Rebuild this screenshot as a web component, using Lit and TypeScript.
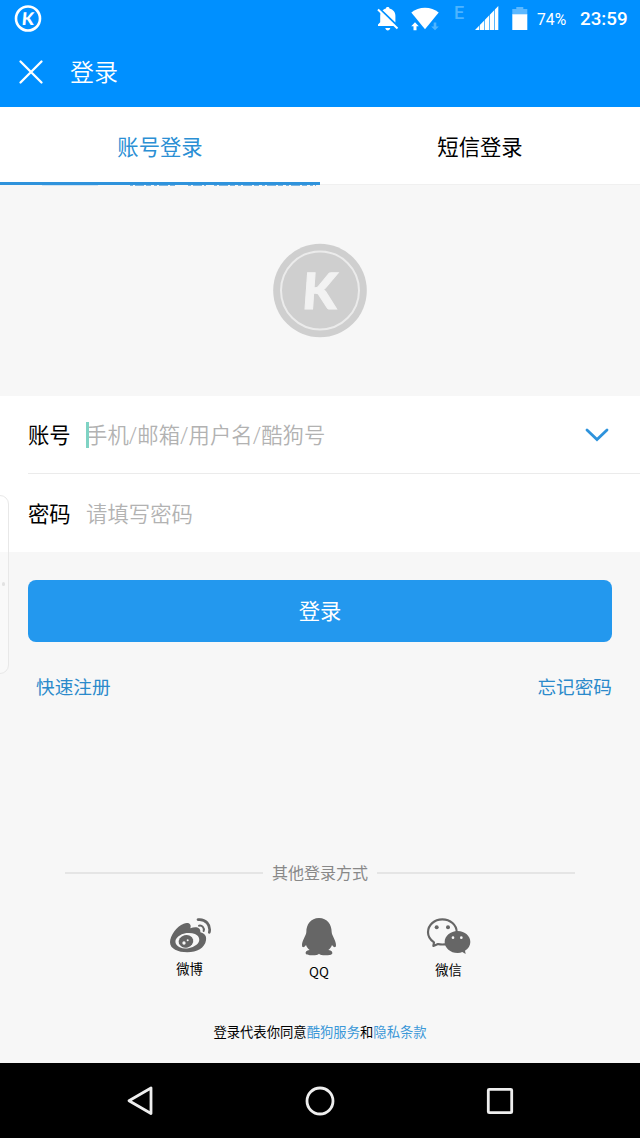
import { LitElement, html, css, svg } from "lit";
import { customElement, property, state } from "lit/decorators.js";
import { classMap } from "lit/directives/class-map.js";

const bell = svg`<svg class="bell" width="24" height="26" viewBox="376 6 24 26">
  <path fill="#fff" d="M381 11.5 395.500 26H378v-1.500l2.200-2.200v-6.300c0-1.600.2-3 .8-4.500zM382.600 10.200c1-1 2-1.500 3.400-1.800V8c0-1.500 3.400-1.500 3.400 0v.5c4 1 6 4 6 7.500v6.500zM385.300 28h5c-.4 3.200-4.600 3.200-5 0z"/>
  <path stroke="#fff" stroke-width="2" d="M378 9.500 397.500 28.500"/></svg>`;

const wifi = svg`<svg class="wifi" width="30" height="26" viewBox="410 6 30 26">
  <path fill="#fff" d="M411.300 12.600C418.500 6 431.500 6 438.700 12.600L425 29.300z"/>
  <path fill="#fff" stroke="#0090ff" stroke-width="1.500" paint-order="stroke" d="M415 22.200 418.800 26.300H416.500V30.300H413.500V26.300H411.200z"/>
  <path fill="#4db4ff" d="M435 30.300 431.200 26.500H433.700V22.500H436.300V26.500H438.800z"/></svg>`;

const signal = svg`<svg class="signal" width="24" height="26" viewBox="475 5 24 26">
  <path fill="#fff" d="M475 30 498.300 6V30z"/>
  <path stroke="#0090ff" stroke-opacity=".65" stroke-width="1" d="M479.500 20V31M484.500 15V31M489.500 10V31M494.500 5V31"/></svg>`;

const battery = svg`<svg class="battery" width="16" height="25" viewBox="512 6 16 25">
  <path fill="#5cb8ff" d="M512.300 9h4V7h7v2h4v6h-15z"/>
  <path fill="#fff" d="M512.300 14.300h15V30h-15z"/></svg>`;

const weibo = svg`<svg width="43" height="37" viewBox="54 50 129 111">
  <path fill="#666" d="M60 126C60 105 80 78 101 70C115 65 126 71 121 84C136 78 153 80 151 96C165 100 170 107 168 120C165 143 140 156 112 156C84 156 60 146 60 126Z"/>
  <ellipse cx="112" cy="121" rx="36" ry="23" fill="#f7f7f7" transform="rotate(-8 112 121)"/>
  <ellipse cx="108" cy="123" rx="22" ry="19" fill="#666" transform="rotate(-15 108 123)"/>
  <circle cx="102" cy="128" r="5" fill="#f7f7f7"/><circle cx="113" cy="120" r="3" fill="#f7f7f7"/>
  <path fill="none" stroke="#666" stroke-width="8" stroke-linecap="round" d="M144 58C166 55 183 73 178 96"/>
  <path fill="none" stroke="#666" stroke-width="6" stroke-linecap="round" d="M147 76C156 74 164 82 161 92"/></svg>`;

const qq = svg`<svg width="36" height="39" viewBox="453 53 108 117">
  <path fill="#666" d="M507 56C482 56 469 76 469 98C469 108 456 123 456 137C456 147 462 145 468 137C470 144 474 148 479 152C468 154 467 158 467 161C467 167 477 168 487 168C498 168 504 166 507 163C510 166 516 168 527 168C537 168 547 167 547 161C547 158 546 154 535 152C540 148 544 144 546 137C552 145 558 147 558 137C558 123 545 108 545 98C545 76 532 56 507 56Z"/></svg>`;

const wechat = svg`<svg width="46" height="38" viewBox="828 50 138 114">
  <path fill="none" stroke="#666" stroke-width="6.500" stroke-linejoin="round" d="M877 57C853 57 834 74 834 96C834 109 841 119 852 126L850 137L864 131C868 132 872 132.500 877 132.500C901 132.500 920 116 920 95C920 74 901 57 877 57Z"/>
  <circle cx="860" cy="81" r="6" fill="#666"/><circle cx="894" cy="81" r="6" fill="#666"/>
  <path fill="#666" d="M923 92C901 92 884 107 884 125C884 143 901 158 923 158C928 158 933 157 937 155L947 161L945 151C955 145 961 136 961 125C961 107 945 92 923 92Z"/>
  <circle cx="909" cy="112" r="4" fill="#f7f7f7"/><circle cx="934" cy="112" r="4" fill="#f7f7f7"/></svg>`;

@customElement("status-bar")
class StatusBar extends LitElement {
  static styles = css`
    :host { display: flex; height: 38px; padding: 0 12px 0 14px; color: #fff; font-family: Roboto, sans-serif; white-space: nowrap; }
    svg { display: block; flex: none; }
    .badge { margin-top: 4px; }
    .bell { margin: 6px 0 0 auto; }
    .wifi { margin: 6px 0 0 10px; }
    .net { width: 20px; margin: 3px 0 0 14px; font-size: 18px; font-weight: 500; line-height: 20px; color: #4db4ff; }
    .signal { margin: 5px 0 0 1px; }
    .battery { margin: 6px 0 0 13px; }
    .pct { width: 43px; margin-left: 9px; font-size: 15.700px; line-height: 39px; }
    .time { width: 48px; font-size: 18.800px; font-weight: 500; line-height: 39px; }
  `;
  render() {
    return html`
      <svg class="badge" width="28" height="28" viewBox="0 0 28 28">
        <circle cx="14" cy="14.500" r="12" fill="none" stroke="#fff" stroke-width="2.600"/>
        <text transform="translate(13.400 20.500) skewX(-5)" text-anchor="middle" font-family="Lato" font-weight="900" font-size="17.500" fill="#fff">K</text>
      </svg>
      ${bell}${wifi}<span class="net">E</span>${signal}${battery}
      <span class="pct">74%</span><span class="time">23:59</span>`;
  }
}

@customElement("form-row")
class FormRow extends LitElement {
  @property() label = "";
  @property() hint = "";
  @property({ type: Boolean }) active = false;
  static styles = css`
    :host { display: flex; align-items: center; height: 77px; padding: 1px 30px 0 28px; font-size: 21.33px; line-height: 32px; color: #000; }
    .label { width: 58px; }
    .hint { flex: 1; color: #b2b2b2; position: relative; font-weight: 350; letter-spacing: 0.05px; }
    .caret { position: absolute; left: 0; top: 2px; width: 3px; height: 26px; background: #7fd3c4; }
    svg { display: block; margin-top: -1px; }
  `;
  render() {
    return html`<span class="label">${this.label}</span>
      <span class="hint">${this.active ? html`<i class="caret"></i>` : ""}${this.hint}</span>
      ${this.active
        ? html`<svg width="26" height="18" viewBox="0 0 26 18"><path d="M3 4 13 13.500 23 4" fill="none" stroke="#2e93dc" stroke-width="2.800" stroke-linecap="round"/></svg>`
        : ""}`;
  }
}

@customElement("app-root")
class AppRoot extends LitElement {
  @state() private tab = 0;
  static styles = css`
    :host { display: flex; flex-direction: column; position: relative; width: 640px; height: 1138px; overflow: hidden; background: #f7f7f7; font-family: Roboto, "Noto Sans CJK SC", sans-serif; color: #000; }
    svg { display: block; }
    .top { height: 107px; background: #0090ff; color: #fff; }
    .bar { display: flex; align-items: center; height: 68px; padding-left: 18px; font-size: 24px; line-height: 36px; font-weight: 350; }
    .bar span { margin: 2px 0 0 26px; }
    .tabs { display: flex; height: 78px; background: #fff; }
    .tab { flex: 1; box-sizing: border-box; height: 78px; text-align: center; font-size: 21.33px; line-height: 81px; border-bottom: 1px solid #f0f0f0; }
    .tab.on { color: #2b8fd4; border-bottom: 3.500px solid #2f93dc; }
    .hero { display: flex; justify-content: center; position: relative; height: 211px; }
    .hero svg { margin-top: 57px; }
    .hero .residue { position: absolute; left: 0; top: 0; margin: 0; }
    .form { background: #fff; height: 156px; }
    .rule { height: 1px; margin: -1px 0 1px 28px; background: #ebebeb; }
    .submit { margin: 28px 28px 0; height: 62px; border-radius: 8px; background: #2398ee; color: #fff; text-align: center; font-size: 21.33px; line-height: 64px; }
    .links { display: flex; justify-content: space-between; margin: 32px 28px 0 36px; font-size: 18.67px; line-height: 28px; color: #2b8acb; }
    .other { display: flex; align-items: center; gap: 9px; margin: 160px 65px 0; font-size: 16px; line-height: 24px; color: #888; }
    .other i { flex: 1; height: 2px; margin-top: -2px; background: #e5e5e5; }
    .ways { display: grid; grid-template-columns: repeat(3, 129.500px); justify-content: center; height: 66px; margin: 31px 0 0 -2px; font-size: 13.33px; line-height: 20px; }
    .way { display: flex; flex-direction: column; align-items: center; gap: 6px; }
    .latin { font-size: 14px; font-family: "Noto Sans CJK SC", sans-serif; font-size: 13.33px; }
    .terms { margin-top: 40px; text-align: center; font-size: 13.33px; line-height: 20px; }
    .terms b { font-weight: 400; color: #3b98d8; }
    .nav { display: flex; justify-content: space-around; align-items: center; height: 75px; margin-top: auto; padding: 0 50px; background: #000; }
    .handle { position: absolute; left: -11px; top: 495px; width: 18px; height: 177px; border: 1px solid #e8e8e8; border-radius: 9px; background: rgba(255,255,255,.25); }
    .dot { position: absolute; left: 12px; top: 86px; width: 3px; height: 4px; background: #e2e2e2; border-radius: 2px; }
  `;
  render() {
    return html`
      <div class="top">
        <status-bar></status-bar>
        <div class="bar">
          <svg width="26" height="26" viewBox="0 0 26 26"><path d="M2.500 2.500 23.500 23.500M23.500 2.500 2.500 23.500" stroke="#fff" stroke-width="2.300" stroke-linecap="round"/></svg>
          <span>登录</span>
        </div>
      </div>
      <div class="tabs">
        ${["账号登录", "短信登录"].map((t, i) => html`<div class=${classMap({ tab: true, on: this.tab === i })} @click=${() => (this.tab = i)}>${t}</div>`)}
      </div>
      <div class="hero">
        <svg class="residue" width="320" height="2" viewBox="0 0 320 2"><path d="M42 .3H98" stroke="#a5cdec" stroke-width=".6"/><path d="M130 .5H176M188 .5H206M214 .5H316" stroke="#7db5e0" stroke-dasharray="3 2 9 2 5 3"/></svg>
        <svg width="96" height="96" viewBox="0 0 96 96">
          <circle cx="48" cy="48.500" r="46.800" fill="#cfcfcf"/>
          <circle cx="48" cy="48.500" r="39" fill="none" stroke="#ebebeb" stroke-width="2"/>
          <text transform="translate(46.500 67) skewX(-4)" text-anchor="middle" font-family="Lato" font-weight="900" font-size="50" fill="#f2f2f2" stroke="#f2f2f2" stroke-width="1">K</text>
        </svg>
      </div>
      <div class="form">
        <form-row label="账号" hint="手机/邮箱/用户名/酷狗号" active></form-row>
        <div class="rule"></div>
        <form-row label="密码" hint="请填写密码"></form-row>
      </div>
      <div class="submit">登录</div>
      <div class="links"><span>快速注册</span><span>忘记密码</span></div>
      <div class="other"><i></i>其他登录方式<i></i></div>
      <div class="ways">
        <div class="way">${weibo}<span>微博</span></div>
        <div class="way">${qq}<span class="latin">QQ</span></div>
        <div class="way">${wechat}<span>微信</span></div>
      </div>
      <div class="terms">登录代表你同意<b>酷狗服务</b>和<b>隐私条款</b></div>
      <div class="nav">
        <svg width="30" height="32" viewBox="0 0 30 32"><path d="M26 3V28.500L4 15.700Z" fill="none" stroke="#eee" stroke-width="2.800" stroke-linejoin="round"/></svg>
        <svg width="30" height="30" viewBox="0 0 30 30"><circle cx="15" cy="15" r="13" fill="none" stroke="#eee" stroke-width="2.800"/></svg>
        <svg width="30" height="30" viewBox="0 0 30 30"><rect x="3.300" y="3.300" width="23.400" height="23.400" rx="1" fill="none" stroke="#eee" stroke-width="2.800"/></svg>
      </div>
      <div class="handle"><i class="dot"></i></div>`;
  }
}
